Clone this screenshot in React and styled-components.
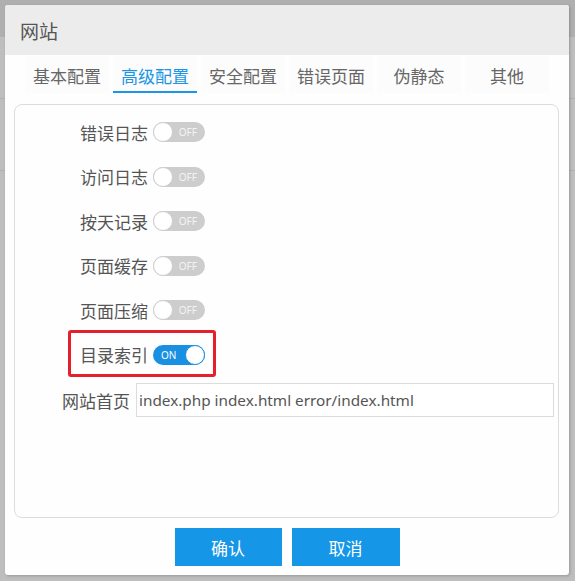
import React from "react";
import styled, { createGlobalStyle } from "styled-components";

const GlobalStyle = createGlobalStyle`
  html, body {
    margin: 0;
    padding: 0;
    background: #bebebe;
    font-family: "Noto Sans CJK SC", "Noto Sans", sans-serif;
  }
`;

const tabs = ["基本配置", "高级配置", "安全配置", "错误页面", "伪静态", "其他"];

const switches = [
  { label: "错误日志", on: false },
  { label: "访问日志", on: false },
  { label: "按天记录", on: false },
  { label: "页面缓存", on: false },
  { label: "页面压缩", on: false },
  { label: "目录索引", on: true, marked: true },
];

const Screen = styled.div`
  position: relative;
  width: 575px;
  height: 581px;
  overflow: hidden;
`;

const PageTop = styled.div`
  height: 37px;
  background: #afafaf;
`;

const PageRule = styled.div`
  height: 1px;
  margin-top: ${(p) => p.$gap}px;
  background: #b0b0b0;
`;

const Modal = styled.div`
  position: absolute;
  top: 5px;
  left: 5px;
  width: 564px;
  height: 570px;
  background: #fefefe;
  border-radius: 3px;
  box-shadow: 1px 1px 3px rgba(0, 0, 0, 0.2);
  display: flex;
  flex-direction: column;
  overflow: hidden;
`;

const Header = styled.div`
  height: 50px;
  background: #ececec;
  padding: 0 0 0 15px;
  box-sizing: border-box;
  display: flex;
  align-items: center;
  font-size: 19px;
  color: #555;
`;

const TabBar = styled.div`
  display: flex;
  gap: 4px;
  padding: 1px 0 0 20px;
`;

const Tab = styled.div`
  width: 84px;
  height: 37px;
  box-sizing: border-box;
  display: flex;
  align-items: center;
  justify-content: center;
  background: #fcfcfc;
  font-size: 17px;
  color: ${(p) => (p.$active ? "#1a96e6" : "#666")};
  border-bottom: 2px solid ${(p) => (p.$active ? "#1a96e6" : "transparent")};
  padding-top: 3px;
`;

const Panel = styled.div`
  margin: 11px 10px 0 9px;
  height: 414px;
  box-sizing: border-box;
  border: 1px solid #dcdcdc;
  border-radius: 8px;
  padding-top: 5px;
  display: flex;
  flex-direction: column;
`;

const SwitchRow = styled.div`
  position: relative;
  align-self: flex-start;
  margin-left: 65px;
  height: 44.5px;
  display: flex;
  align-items: center;
  gap: 5px;

  &::after {
    content: "";
    display: ${(p) => (p.$marked ? "block" : "none")};
    position: absolute;
    top: -3px;
    bottom: 0;
    left: -12px;
    right: -11px;
    border: 3px solid #e51f2b;
    border-radius: 3px;
  }
`;

const Label = styled.span`
  font-size: 17px;
  color: #555;
  white-space: nowrap;
`;

const Track = styled.div`
  position: relative;
  width: 52px;
  height: 20px;
  border-radius: 10px;
  background: ${(p) => (p.$on ? "#1a90e3" : "#cdcdcd")};
  display: flex;
  align-items: center;
  justify-content: ${(p) => (p.$on ? "flex-start" : "flex-end")};
  padding: ${(p) => (p.$on ? "0 0 0 8px" : "0 8px 0 0")};
  box-sizing: border-box;
  font-family: "Noto Sans", sans-serif;
  font-size: 10px;
  color: ${(p) => (p.$on ? "#fff" : "#f4f4f4")};
`;

const Knob = styled.span`
  position: absolute;
  top: 0;
  ${(p) => (p.$on ? "right: 0;" : "left: 0;")}
  width: 20px;
  height: 20px;
  box-sizing: border-box;
  border-radius: 50%;
  background: #fff;
  border: 1px solid ${(p) => (p.$on ? "#1a90e3" : "#cdcdcd")};
`;

const FieldRow = styled.div`
  display: flex;
  align-items: center;
  gap: 6px;
  margin: 6px 4px 0 47px;
`;

const Input = styled.input`
  flex: 1;
  height: 34px;
  box-sizing: border-box;
  border: 1px solid #dcdcdc;
  padding: 0 2px;
  font-family: "Noto Sans", "Noto Sans CJK SC", sans-serif;
  font-size: 15.3px;
  color: #555;
  background: #fff;
  outline: none;
`;

const Footer = styled.div`
  display: flex;
  justify-content: center;
  gap: 10px;
  padding-top: 10px;
`;

const Button = styled.button`
  width: ${(p) => p.$w}px;
  height: 38px;
  border: none;
  background: #1596e6;
  color: #fff;
  font-family: "Noto Sans CJK SC", sans-serif;
  font-size: 17px;
  cursor: pointer;
`;

const Switch = ({ on }) => (
  <Track $on={on}>
    {on ? "ON" : "OFF"}
    <Knob $on={on} />
  </Track>
);

export default function App() {
  return (
    <Screen>
      <GlobalStyle />
      <PageTop />
      <PageRule $gap={61} />
      <PageRule $gap={71} />
      <Modal>
        <Header>网站</Header>
        <TabBar>
          {tabs.map((t) => (
            <Tab key={t} $active={t === "高级配置"}>
              {t}
            </Tab>
          ))}
        </TabBar>
        <Panel>
          {switches.map((s) => (
            <SwitchRow key={s.label} $marked={s.marked}>
              <Label>{s.label}</Label>
              <Switch on={s.on} />
            </SwitchRow>
          ))}
          <FieldRow>
            <Label>网站首页</Label>
            <Input defaultValue="index.php index.html error/index.html" />
          </FieldRow>
        </Panel>
        <Footer>
          <Button $w={107}>确认</Button>
          <Button $w={108}>取消</Button>
        </Footer>
      </Modal>
    </Screen>
  );
}
